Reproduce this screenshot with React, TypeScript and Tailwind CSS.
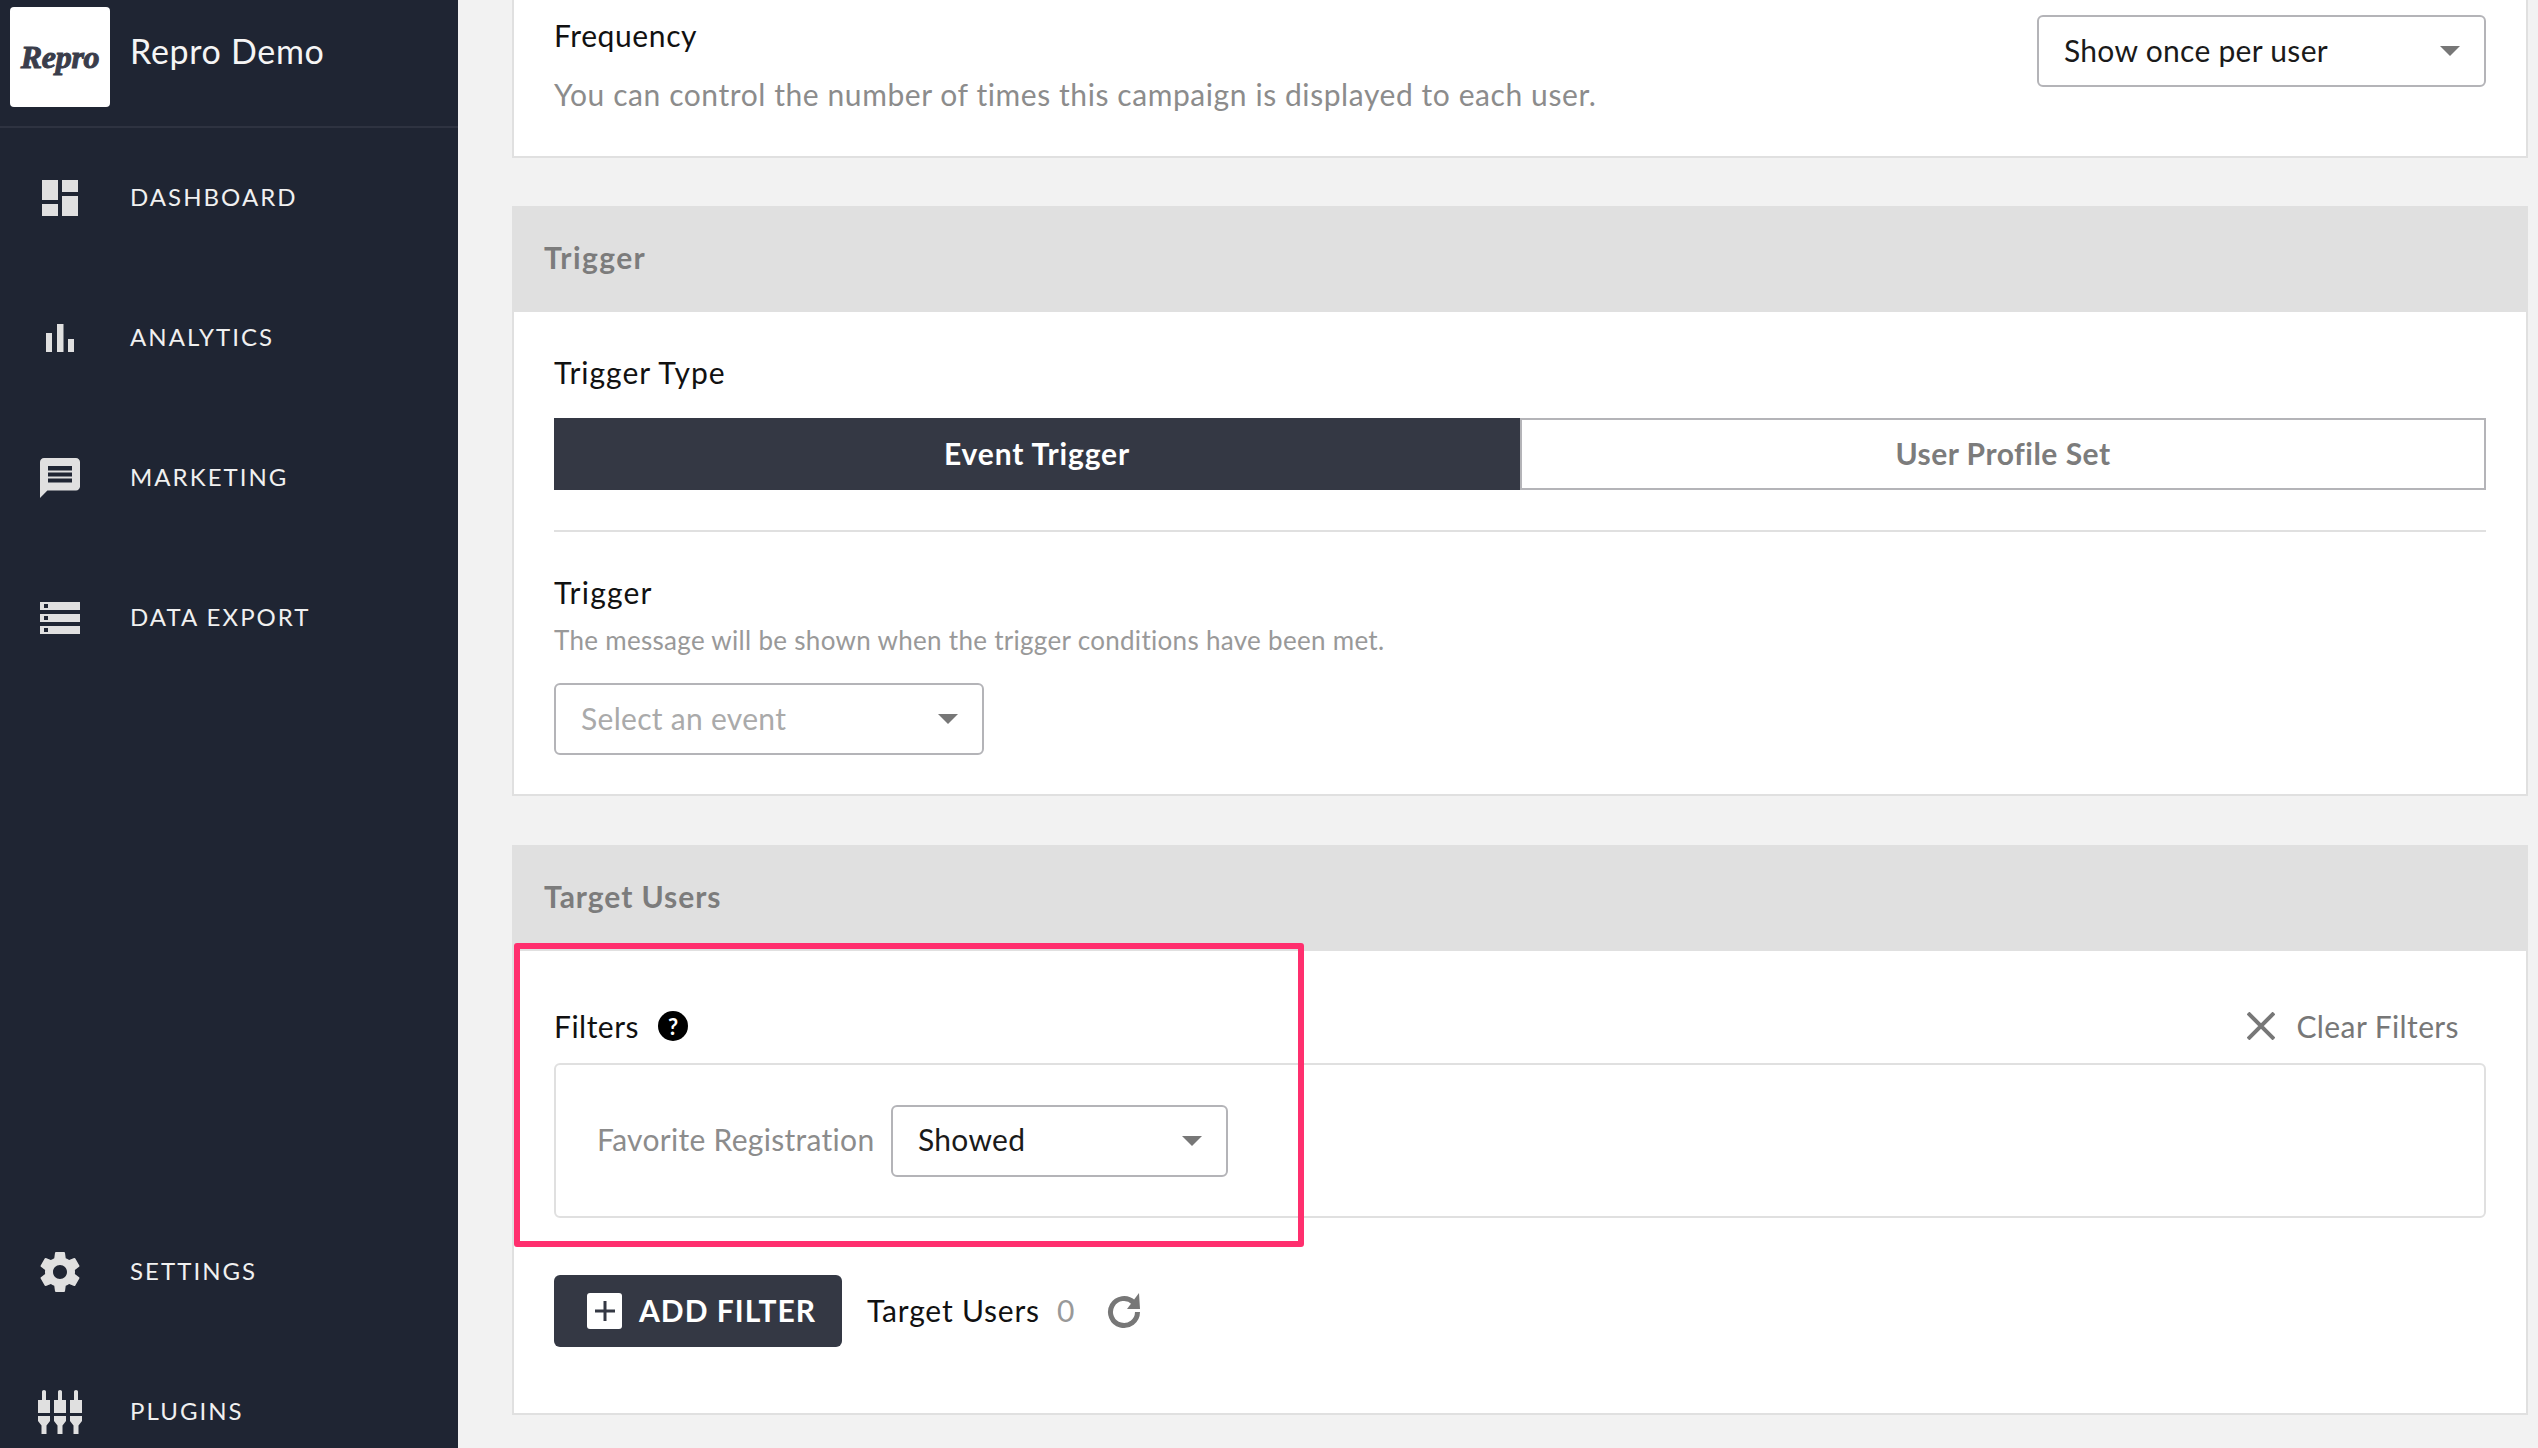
import type { ReactNode } from "react";

const FONT = "font-['Lato','Open_Sans',sans-serif]";

function Arrow() {
  return (
    <svg width="20" height="10" viewBox="0 0 20 10" className="shrink-0">
      <path d="M0 0h20L10 10z" fill="#777777" />
    </svg>
  );
}

function Select({ label, width, placeholder }: { label: string; width: string; placeholder?: boolean }) {
  return (
    <div
      className={`flex h-[72px] items-center justify-between rounded-[6px] border-2 border-[#b4b4b8] bg-white pl-[25px] pr-[24px] text-[30px] tracking-[0.3px] ${width} ${
        placeholder ? "text-[#aaaaaa]" : "text-[#1a1a1a]"
      }`}
    >
      <span className="pb-[2px]">{label}</span>
      <Arrow />
    </div>
  );
}

function CardHeader({ title, spacing }: { title: string; spacing: string }) {
  return (
    <div className={`flex h-[106px] items-center bg-[#e0e0e0] pb-[4px] pl-[32px] text-[30px] font-bold text-[#7c7c7c] ${spacing}`}>
      {title}
    </div>
  );
}

const ICON = "#e0e0e0";

const NAV_TOP: { label: string; icon: ReactNode }[] = [
  {
    label: "DASHBOARD",
    icon: (
      <svg width="36" height="36" viewBox="0 0 36 36" fill={ICON}>
        <rect x="0" y="0" width="16" height="20" />
        <rect x="20" y="0" width="16" height="12" />
        <rect x="0" y="24" width="16" height="12" />
        <rect x="20" y="16" width="16" height="20" />
      </svg>
    ),
  },
  {
    label: "ANALYTICS",
    icon: (
      <svg width="28" height="28" viewBox="0 0 28 28" fill={ICON}>
        <rect x="0" y="9" width="6" height="19" />
        <rect x="11" y="0" width="6.5" height="28" />
        <rect x="22" y="15" width="6" height="13" />
      </svg>
    ),
  },
  {
    label: "MARKETING",
    icon: (
      <svg width="48" height="48" viewBox="0 0 24 24" fill={ICON}>
        <path
          fillRule="evenodd"
          d="M20 2H4c-1.100 0-2 .9-2 2v18l3.700-3.700H20c1.100 0 2-.9 2-2V4c0-1.100-.9-2-2-2zM6 6h12v2.300H6V6zm0 3.300h12v2H6v-2zm0 2.900h12v2H6v-2z"
        />
      </svg>
    ),
  },
  {
    label: "DATA EXPORT",
    icon: (
      <svg width="48" height="48" viewBox="0 0 24 24" fill={ICON}>
        <path d="M2 20h20v-4H2v4zm2-3h2v2H4v-2zM2 4v4h20V4H2zm4 3H4V5h2v2zm-4 7h20v-4H2v4zm2-3h2v2H4v-2z" />
      </svg>
    ),
  },
];

const NAV_BOTTOM: { label: string; icon: ReactNode }[] = [
  {
    label: "SETTINGS",
    icon: (
      <svg width="48" height="48" viewBox="0 0 24 24" fill={ICON}>
        <path d="M19.43 12.98c.04-.32.07-.64.07-.98s-.03-.66-.07-.98l2.11-1.65c.19-.15.24-.42.12-.64l-2-3.46c-.12-.22-.39-.3-.61-.22l-2.49 1c-.52-.4-1.08-.73-1.69-.98l-.38-2.65C14.46 2.180 14.25 2 14 2h-4c-.25 0-.46.18-.49.42l-.38 2.650c-.61.25-1.17.59-1.69.98l-2.49-1c-.23-.09-.49 0-.61.22l-2 3.460c-.13.22-.07.49.12.64l2.11 1.650c-.04.32-.07.65-.07.98s.03.66.07.98l-2.11 1.650c-.19.15-.24.42-.12.64l2 3.460c.12.22.39.3.61.22l2.49-1c.52.4 1.08.73 1.69.98l.38 2.650c.03.24.24.42.49.42h4c.25 0 .46-.18.49-.42l.38-2.650c.61-.25 1.17-.59 1.69-.98l2.49 1c.23.09.49 0 .61-.22l2-3.460c.12-.22.07-.49-.12-.64l-2.11-1.650zM12 15.500c-1.930 0-3.500-1.570-3.500-3.500s1.570-3.500 3.500-3.500 3.500 1.570 3.500 3.500-1.570 3.500-3.500 3.500z" />
      </svg>
    ),
  },
  {
    label: "PLUGINS",
    icon: (
      <svg width="44" height="44" viewBox="0 0 44 44" fill={ICON}>
        {[0, 16, 32].map((x) => (
          <g key={x} transform={`translate(${x} 0)`}>
            <path d="M4 1.500a2 1.500 0 0 1 4 0V10h4v13H0V10h4z" />
            <path d="M0 26h12v5l-3.500 4.500V44h-5v-8.500L0 31z" />
          </g>
        ))}
      </svg>
    ),
  },
];

function NavItem({ label, icon }: { label: string; icon: ReactNode }) {
  return (
    <div className="flex h-[140px] shrink-0 items-center">
      <div className="mr-[10px] flex w-[120px] justify-center">{icon}</div>
      <span className="pb-[2px] text-[24px] tracking-[0.085em] text-[#f0f0f0]">{label}</span>
    </div>
  );
}

function Sidebar() {
  return (
    <aside className="flex h-full w-[458px] shrink-0 flex-col bg-[#1f2533]">
      <div className="flex h-[128px] shrink-0 items-start border-b-2 border-[#2e3341]">
        <div className="ml-[10px] mt-[7px] flex h-[100px] w-[100px] items-center justify-center rounded-[4px] bg-white font-['Liberation_Serif',serif] text-[32px] font-bold italic tracking-[-0.01em] text-[#3a3d4b] [-webkit-text-stroke:1px_#3a3d4b]">
          Repro
        </div>
        <span className="ml-[20px] mt-[30px] text-[34px] leading-[42px] tracking-[0.02em] text-[#f5f5f5]">Repro Demo</span>
      </div>
      {NAV_TOP.map((item) => (
        <NavItem key={item.label} {...item} />
      ))}
      <div className="h-[514px] shrink-0" />
      {NAV_BOTTOM.map((item) => (
        <NavItem key={item.label} {...item} />
      ))}
    </aside>
  );
}

export default function App() {
  return (
    <div className={`flex h-[1448px] w-full overflow-hidden bg-[#f2f2f2] ${FONT}`}>
      <Sidebar />
      <main className="flex flex-1 flex-col gap-[48px] pl-[54px] pr-[10px]">
        {/* scrolled, so only the bottom of this card shows */}
        <section className="flex h-[158px] shrink-0 items-start justify-between border-2 border-t-0 border-[#e0e0e0] bg-white px-[40px]">
          <div>
            <div className="mt-[15px] h-[40px] text-[30px] leading-[40px] tracking-[0.6px] text-[#111111]">Frequency</div>
            <div className="mt-[19px] h-[40px] text-[30px] leading-[40px] tracking-[0.58px] text-[#8c8c8c]">
              You can control the number of times this campaign is displayed to each user.
            </div>
          </div>
          <div className="mt-[15px]">
            <Select label="Show once per user" width="w-[449px]" />
          </div>
        </section>

        <section className="shrink-0">
          <CardHeader title="Trigger" spacing="tracking-[1.4px]" />
          <div className="border-2 border-t-0 border-[#e0e0e0] bg-white px-[40px] pb-[39px] pt-[40px]">
            <div className="h-[40px] text-[30px] leading-[40px] tracking-[1px] text-[#111111]">Trigger Type</div>
            <div className="mt-[26px] flex h-[72px]">
              <div className="flex w-[966px] items-center justify-center bg-[#343844] pb-[2px] text-[30px] font-bold tracking-[0.87px] text-white">
                Event Trigger
              </div>
              <div className="flex flex-1 items-center justify-center border-2 border-[#b4b4b8] bg-white pb-[2px] text-[30px] font-bold tracking-[0.5px] text-[#7c7c7c]">
                User Profile Set
              </div>
            </div>
            <div className="mt-[40px] h-[2px] bg-[#e0e0e0]" />
            <div className="mt-[40px] h-[40px] text-[30px] leading-[40px] tracking-[1.2px] text-[#111111]">Trigger</div>
            <div className="mt-[10px] h-[36px] text-[26px] leading-[36px] tracking-[0.3px] text-[#999999]">
              The message will be shown when the trigger conditions have been met.
            </div>
            <div className="mt-[25px]">
              <Select label="Select an event" width="w-[430px]" placeholder />
            </div>
          </div>
        </section>

        <section className="relative mt-px shrink-0">
          <CardHeader title="Target Users" spacing="tracking-[0.95px]" />
          <div className="border-2 border-t-0 border-[#e0e0e0] bg-white px-[40px] pb-[66px] pt-[56px]">
            <div className="flex h-[40px] items-center justify-between pb-[2px]">
              <div className="flex items-center">
                <span className="text-[30px] tracking-[0.5px] text-[#111111]">Filters</span>
                <span className="ml-[19px] flex h-[30px] w-[30px] items-center justify-center rounded-full bg-black text-[22px] font-bold text-white">
                  ?
                </span>
              </div>
              <div className="flex items-center pr-[27px] text-[30px] tracking-[0.4px] text-[#777777]">
                <svg width="28" height="28" viewBox="0 0 28 28" className="mr-[21px]" stroke="#777777" strokeWidth="4" fill="none">
                  <path d="M1 1l26 26M27 1L1 27" />
                </svg>
                Clear Filters
              </div>
            </div>
            <div className="mt-[16px] flex h-[155px] items-center rounded-[6px] border-2 border-[#e0e0e0] pl-[41px]">
              <span className="w-[294px] shrink-0 pb-[2px] text-[30px] tracking-[0.3px] text-[#8c8c8c]">Favorite Registration</span>
              <Select label="Showed" width="w-[337px]" />
            </div>
            <div className="mt-[57px] flex h-[72px] items-center">
              <div className="flex h-[72px] w-[288px] items-center rounded-[6px] bg-[#343844] pl-[33px]">
                <span className="flex h-[36px] w-[35px] items-center justify-center rounded-[3px] bg-white">
                  <svg width="20" height="20" viewBox="0 0 20 20" fill="#343844">
                    <path d="M8.500 0h3v8.500H20v3h-8.500V20h-3v-8.500H0v-3h8.500z" />
                  </svg>
                </span>
                <span className="ml-[17px] pb-[2px] text-[30px] font-bold tracking-[1px] text-white">ADD FILTER</span>
              </div>
              <span className="ml-[25px] pb-[2px] text-[30px] tracking-[0.8px] text-[#111111]">Target Users</span>
              <span className="ml-[17px] pb-[2px] text-[30px] text-[#999999]">0</span>
              <svg width="36" height="36" viewBox="0 0 36 36" className="ml-[32px]" fill="none">
                <path d="M27.500 9.400A13.500 13.500 0 1 0 31.500 19" stroke="#777777" strokeWidth="5" />
                <path d="M33 0l1 16H21z" fill="#777777" />
              </svg>
            </div>
          </div>
          <div className="absolute left-[2px] top-[98px] h-[304px] w-[790px] rounded-[3px] border-[6px] border-[#ff2f6e]" />
        </section>
      </main>
    </div>
  );
}
